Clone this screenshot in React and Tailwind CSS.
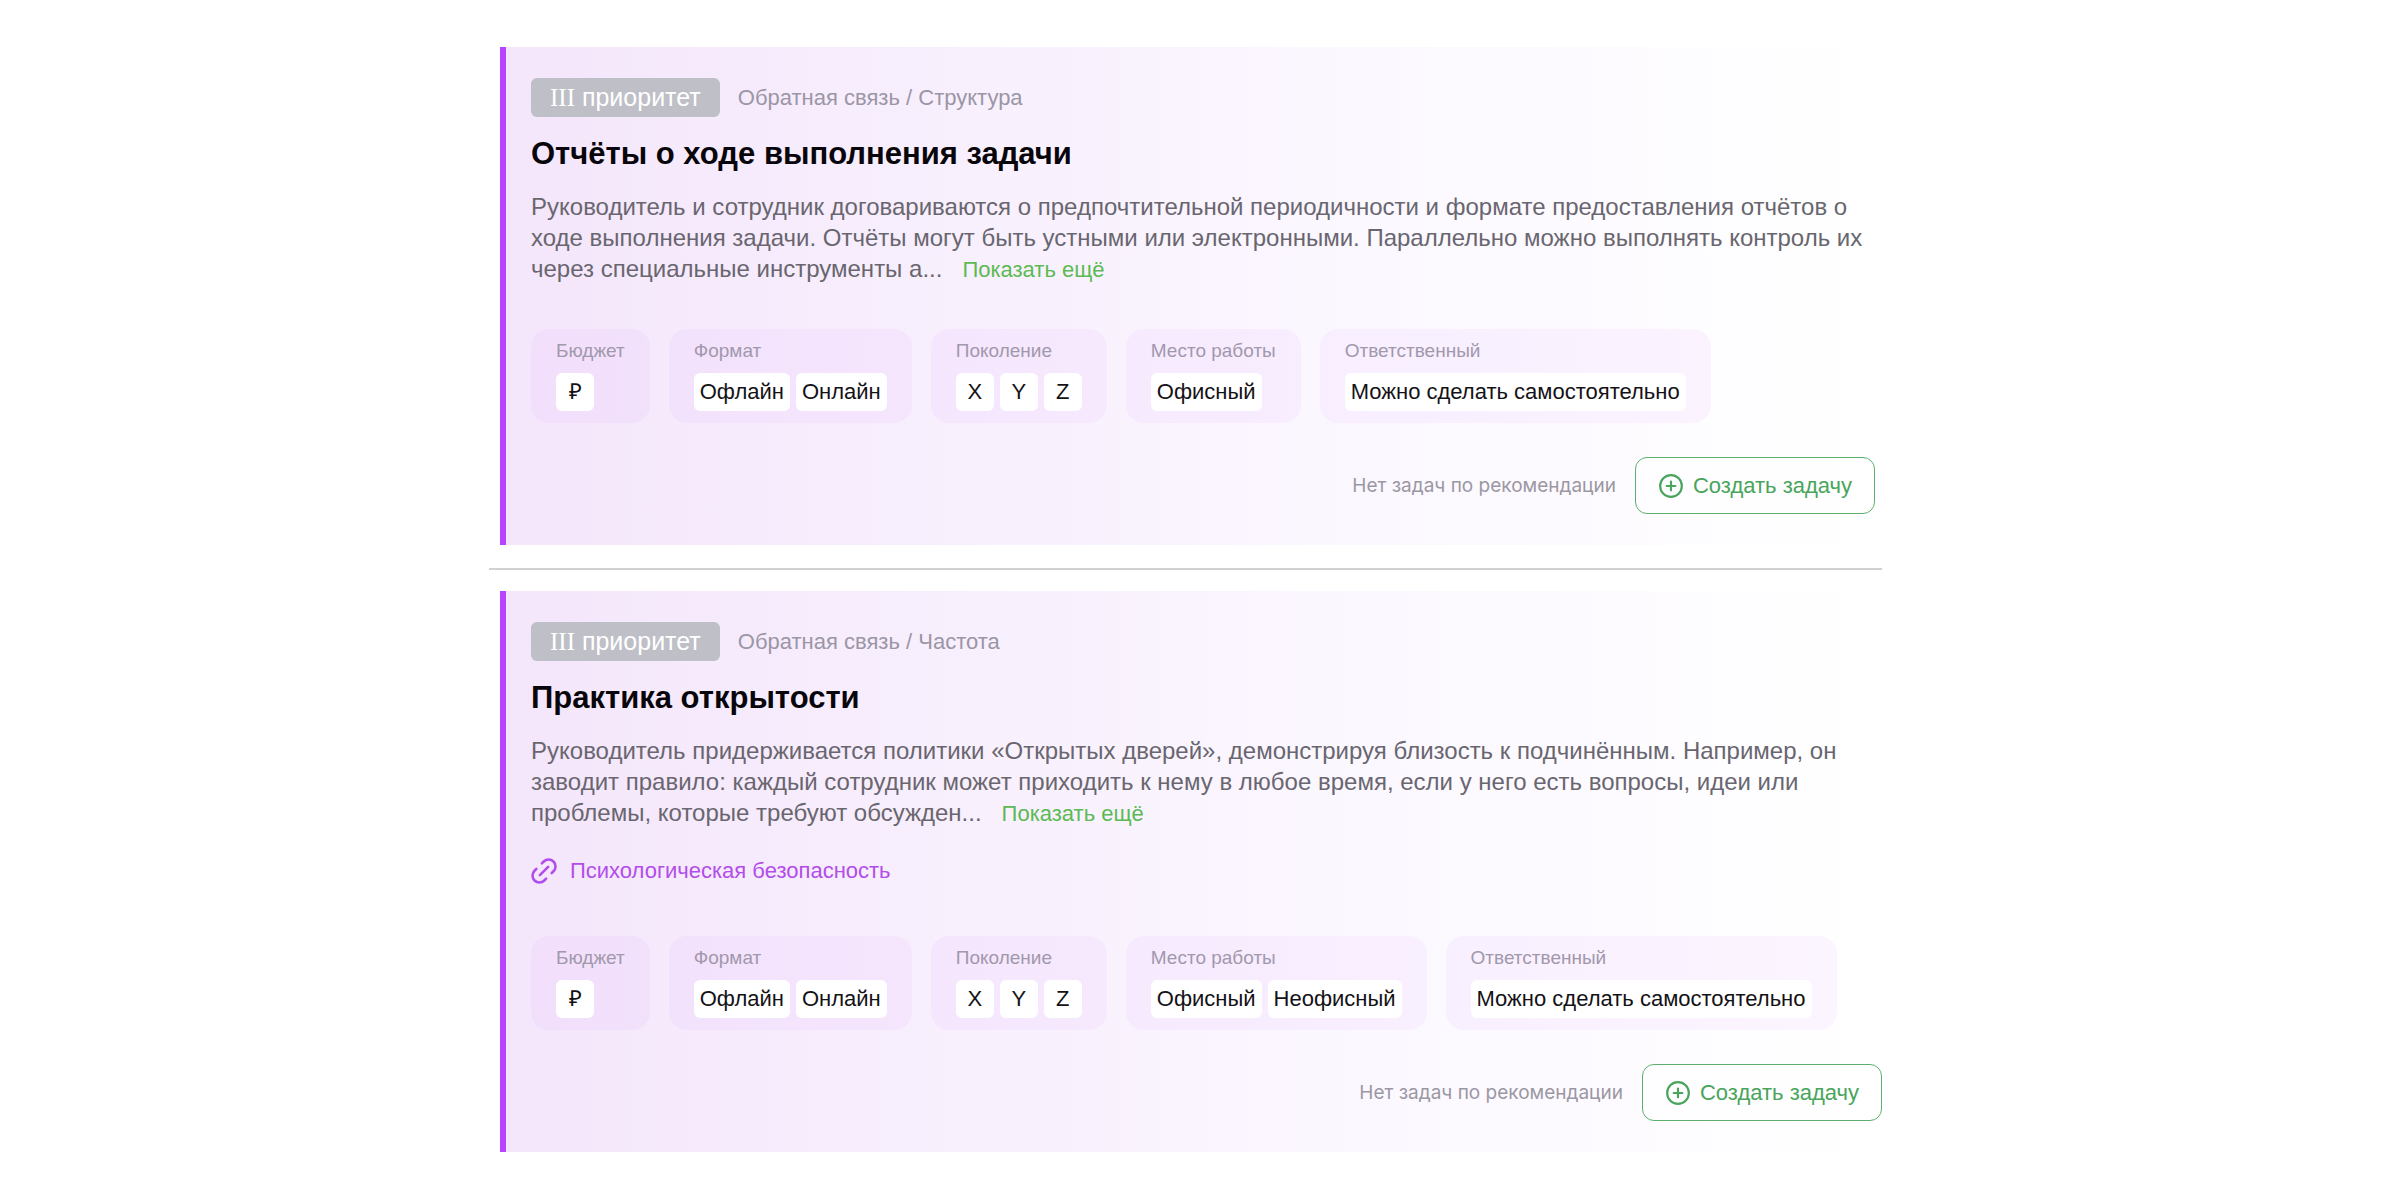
import React from "react";
import { CirclePlus } from "lucide-react";

const recommendations = [
  {
    id: "reports",
    priority: "III",
    category: "Обратная связь / Структура",
    title: "Отчёты о ходе выполнения задачи",
    text: "Руководитель и сотрудник договариваются о предпочтительной периодичности и формате предоставления отчётов о ходе выполнения задачи. Отчёты могут быть устными или электронными. Параллельно можно выполнять контроль их через специальные инструменты а...",
    link: null,
    spacing: "mr-[7px]",
    facts: [
      { label: "Бюджет", values: ["₽"] },
      { label: "Формат", values: ["Офлайн", "Онлайн"] },
      { label: "Поколение", values: ["X", "Y", "Z"] },
      { label: "Место работы", values: ["Офисный"] },
      { label: "Ответственный", values: ["Можно сделать самостоятельно"] },
    ],
  },
  {
    id: "openness",
    priority: "III",
    category: "Обратная связь / Частота",
    title: "Практика открытости",
    text: "Руководитель придерживается политики «Открытых дверей», демонстрируя близость к подчинённым. Например, он заводит правило: каждый сотрудник может приходить к нему в любое время, если у него есть вопросы, идеи или проблемы, которые требуют обсужден...",
    link: "Психологическая безопасность",
    spacing: "",
    facts: [
      { label: "Бюджет", values: ["₽"] },
      { label: "Формат", values: ["Офлайн", "Онлайн"] },
      { label: "Поколение", values: ["X", "Y", "Z"] },
      { label: "Место работы", values: ["Офисный", "Неофисный"] },
      { label: "Ответственный", values: ["Можно сделать самостоятельно"] },
    ],
  },
];

function ChainIcon() {
  return (
    <svg
      viewBox="2 2 20 20"
      className="size-[26px] shrink-0"
      fill="none"
      stroke="currentColor"
      strokeWidth="2"
      strokeLinecap="round"
      aria-hidden="true"
    >
      <g transform="rotate(-45 12 12)">
        <path d="M9 17.3H7A5.3 5.3 0 0 1 7 6.7h2" />
        <path d="M15 6.7h2a5.3 5.3 0 0 1 0 10.6h-2" />
        <path d="M7.5 12h9" />
      </g>
    </svg>
  );
}

function Fact({ label, values }) {
  return (
    <div className="rounded-[18px] bg-[#be46ff]/5 px-[25px] pt-[11px] pb-3">
      <dt className="text-[19px] leading-[22px] text-[#a198ac]">{label}</dt>
      <dd className="mt-[11px] flex gap-1.5">
        {values.map((value) => (
          <span
            key={value}
            className="min-w-[38px] rounded-md bg-white px-1.5 text-center text-[22px] leading-[38px] text-[#141216]"
          >
            {value}
          </span>
        ))}
      </dd>
    </div>
  );
}

function Recommendation({ item }) {
  return (
    <article
      className={`ml-[11px] border-l-[6px] border-[#b944ff] bg-linear-to-r from-[#f4e6fb] via-[#fbf7ff] via-60% to-white bg-origin-border pt-[31px] pb-[31px] pl-[25px] ${item.spacing}`}
    >
      <div className="flex items-center gap-[18px]">
        <span className="rounded-md bg-[#bfbfc7] px-[19px] text-[25px] leading-[38px] text-white">
          <span className="font-['Liberation_Serif',serif]">{item.priority}</span> приоритет
        </span>
        <span className="text-[22px] leading-[38px] text-[#9b96a5]">{item.category}</span>
      </div>

      <h2 className="mt-[17px] text-[31px] leading-10 font-bold text-[#08060a]">{item.title}</h2>

      <p className="mt-[17px] max-w-[1344px] text-[24px] leading-[31px] text-[#69666f]">
        <span>{item.text}</span>
        <button type="button" className="ml-5 cursor-pointer text-[22px] leading-6 text-[#5cba53]">
          Показать ещё
        </button>
      </p>

      {item.link && (
        <a href="#safety" className="mt-[30px] flex w-fit items-center gap-[13px] text-[22px] leading-[26px] text-[#b24deb]">
          <ChainIcon />
          {item.link}
        </a>
      )}

      <dl className={`flex flex-wrap gap-[19px] ${item.link ? "mt-[52px]" : "mt-[45px]"}`}>
        {item.facts.map((fact) => (
          <Fact key={fact.label} {...fact} />
        ))}
      </dl>

      <div className="mt-[34px] flex items-center justify-end gap-[19px]">
        <span className="font-['Inter',sans-serif] text-[19px] leading-[26px] text-[#9b97a3]">
          Нет задач по рекомендации
        </span>
        <button
          type="button"
          className="flex h-[57px] cursor-pointer items-center gap-[9px] rounded-xl border border-[#5bb06c] bg-white/40 px-[22px] text-[22px] text-[#48a55b]"
        >
          <CirclePlus size={26} strokeWidth={2} aria-hidden="true" />
          Создать задачу
        </button>
      </div>
    </article>
  );
}

export default function App() {
  return (
    <main className="min-h-screen bg-white pt-[47px] pr-[518px] pb-12 pl-[489px] font-['Liberation_Sans',Arial,sans-serif]">
      <Recommendation item={recommendations[0]} />
      <hr className="mt-[23px] mb-[21px] border-t-2 border-[#d0d2d1]" />
      <Recommendation item={recommendations[1]} />
    </main>
  );
}
